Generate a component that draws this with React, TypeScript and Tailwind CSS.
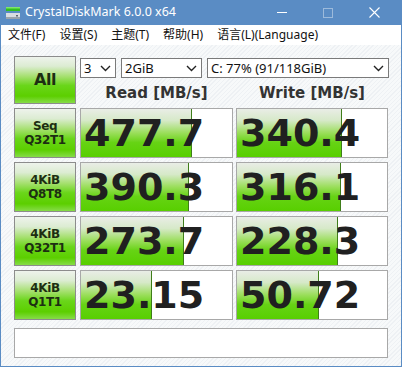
import React from "react";

type Row = { l1: string; l2: string; read: string; readW: number; write: string; writeW: number };

const ROWS: Row[] = [
  { l1: "Seq", l2: "Q32T1", read: "477.7", readW: 111, write: "340.4", writeW: 105 },
  { l1: "4KiB", l2: "Q8T8", read: "390.3", readW: 108, write: "316.1", writeW: 104 },
  { l1: "4KiB", l2: "Q32T1", read: "273.7", readW: 103, write: "228.3", writeW: 101 },
  { l1: "4KiB", l2: "Q1T1", read: "23.15", readW: 71, write: "50.72", writeW: 82 },
];

const GREEN_BTN =
  "bg-[linear-gradient(180deg,#eef3ec_0%,#dcecd2_20%,#a6e070_42%,#6ad61a_62%,#5ccf00_85%,#86dc48_100%)] border border-[#8c8c8c]";

const CAPTION = "font-['DejaVu_Sans',sans-serif] font-bold text-[#1d2e12]";

function Chevron() {
  return (
    <svg width="11" height="7" viewBox="0 0 11 7" className="shrink-0">
      <polyline points="1,1 5.5,5.5 10,1" fill="none" stroke="#222" strokeWidth="1.4" />
    </svg>
  );
}

function Select({ value, w }: { value: string; w: string }) {
  return (
    <div className={`${w} h-[20px] bg-white border border-[#7a7a7a] flex items-center justify-between pl-[3px] pr-[4px]`}>
      <span className="font-['Noto_Sans',sans-serif] text-[13px] leading-none text-[#111]">{value}</span>
      <Chevron />
    </div>
  );
}

function ValueBox({ value, fill }: { value: string; fill: number }) {
  return (
    <div className="relative h-[50px] bg-white border border-[#a8a8a8] overflow-hidden">
      <div
        className="absolute left-0 top-0 bottom-0 bg-[linear-gradient(180deg,#e9ede6_0%,#d6e9c8_24%,#9ade5a_50%,#66d314_70%,#58cf00_100%)] border-r border-[#3f7d1a]"
        style={{ width: fill }}
      />
      <div className="relative h-full flex items-center pl-[3px] font-['DejaVu_Sans',sans-serif] font-bold text-[38px] leading-none text-[#202020]">
        {value}
      </div>
    </div>
  );
}

export default function App() {
  return (
    <div className="w-[402px] h-[367px] flex flex-col bg-[#5a8cc4] px-px pb-px overflow-hidden">
      {/* Title bar */}
      <div className="h-[25px] flex items-center text-white shrink-0 -mx-px px-[5px]">
        <svg width="16" height="16" viewBox="0 0 16 16" className="shrink-0">
          <rect x="1" y="2" width="14" height="4" fill="#2fbf1f" />
          <rect x="1" y="2" width="14" height="1.5" fill="#7ee66a" />
          <rect x="1" y="8" width="14" height="6" fill="#d8dde2" />
          <rect x="1" y="12" width="14" height="2" fill="#9aa3ab" />
          <rect x="11" y="10" width="2" height="1.5" fill="#5b6570" />
        </svg>
        <span className="ml-[4px] font-['Noto_Sans',sans-serif] text-[12.5px] leading-none">CrystalDiskMark 6.0.0 x64</span>
        <div className="ml-auto flex items-center">
          <div className="w-[46px] h-[25px] flex items-center justify-center">
            <div className="w-[10px] h-px bg-white" />
          </div>
          <div className="w-[46px] h-[25px] flex items-center justify-center">
            <div className="w-[10px] h-[10px] border border-white/40" />
          </div>
          <div className="w-[46px] h-[25px] flex items-center justify-center">
            <svg width="11" height="11" viewBox="0 0 11 11">
              <path d="M0.5 0.5 L10.5 10.5 M10.5 0.5 L0.5 10.5" stroke="#fff" strokeWidth="1.1" />
            </svg>
          </div>
        </div>
      </div>

      {/* Menu bar */}
      <div className="h-[20px] bg-white flex items-center pl-[7px] gap-[14px] font-['Noto_Sans','Noto_Sans_CJK_SC',sans-serif] text-[12px] leading-none text-[#111] shrink-0">
        <span>文件(F)</span>
        <span>设置(S)</span>
        <span>主题(T)</span>
        <span>帮助(H)</span>
        <span>语言(L)(Language)</span>
      </div>

      {/* Content */}
      <div className="flex-1 bg-[repeating-linear-gradient(135deg,#f7f9fa_0px,#f7f9fa_2px,#eef1f4_2px,#eef1f4_3px)] pl-[13px] pt-[11px]">
        {/* Top row */}
        <div className="flex gap-[4px]">
          <div className={`w-[62px] h-[48px] ${GREEN_BTN} flex items-center justify-center`}>
            <span className={`${CAPTION} text-[16px] leading-none tracking-[-0.5px]`}>All</span>
          </div>
          <div className="flex flex-col">
            <div className="flex mt-[2px]">
              <Select value="3" w="w-[36px]" />
              <div className="w-[5px]" />
              <Select value="2GiB" w="w-[81px]" />
              <div className="w-[5px]" />
              <Select value="C: 77% (91/118GiB)" w="w-[182px]" />
            </div>
            <div className="flex mt-[5px]">
              <div className="w-[153px] text-center font-['DejaVu_Sans',sans-serif] font-bold text-[15px] leading-[20px] text-[#333]">
                Read [MB/s]
              </div>
              <div className="w-[3px]" />
              <div className="w-[152px] text-center font-['DejaVu_Sans',sans-serif] font-bold text-[15px] leading-[20px] text-[#333]">
                Write [MB/s]
              </div>
            </div>
          </div>
        </div>

        {/* Result rows */}
        <div className="flex flex-col gap-[4px] mt-[4px]">
          {ROWS.map((r, i) => (
            <div key={i} className="flex">
              <div className={`w-[62px] h-[50px] ${GREEN_BTN} flex flex-col items-center justify-center`}>
                <span className={`${CAPTION} text-[12px] leading-[14px] tracking-[-0.4px]`}>{r.l1}</span>
                <span className={`${CAPTION} text-[12px] leading-[14px] tracking-[-0.4px]`}>{r.l2}</span>
              </div>
              <div className="w-[153px] ml-[4px]">
                <ValueBox value={r.read} fill={r.readW} />
              </div>
              <div className="w-[152px] ml-[3px]">
                <ValueBox value={r.write} fill={r.writeW} />
              </div>
            </div>
          ))}
        </div>

        {/* Comment box */}
        <div className="mt-[8px] w-[374px] h-[30px] bg-white border border-[#a8a8a8]" />
      </div>
    </div>
  );
}
